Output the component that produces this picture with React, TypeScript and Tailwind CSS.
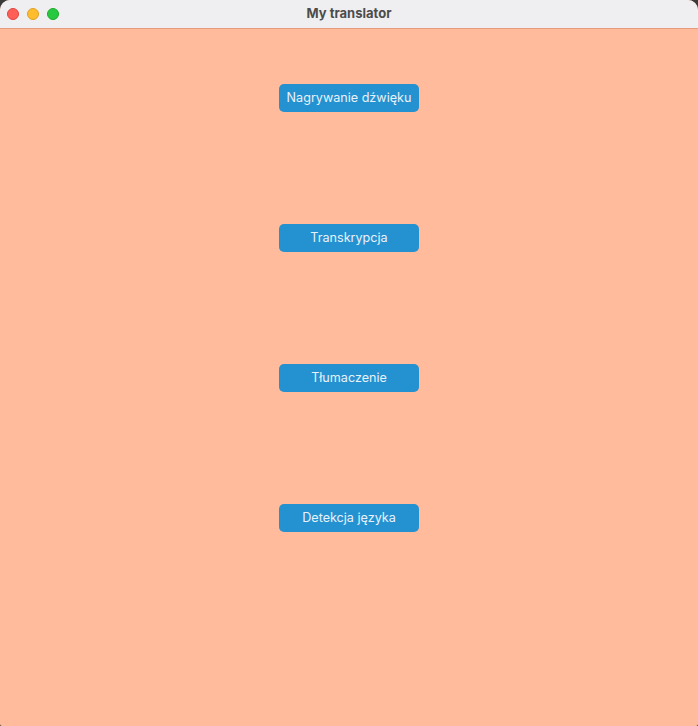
import * as React from 'react';

const actions = ['Nagrywanie dźwięku', 'Transkrypcja', 'Tłumaczenie', 'Detekcja języka'];

function TrafficLights() {
  return (
    <div className="flex items-center gap-2 pl-[7px]">
      <span className="h-3 w-3 rounded-full border border-[#e0443e] bg-[#ff5f57]" />
      <span className="h-3 w-3 rounded-full border border-[#dea123] bg-[#febc2e]" />
      <span className="h-3 w-3 rounded-full border border-[#1aab29] bg-[#28c840]" />
    </div>
  );
}

export default function App() {
  return (
    <div className="h-[726px] w-[698px] bg-[#3a3a3a] font-['Inter',sans-serif]">
      <div className="flex h-full flex-col overflow-hidden rounded-t-[10px] rounded-b-[2px] bg-[#ffbb9b]">
        <div className="relative flex h-[29px] items-center border-b border-[#e79a7c] bg-[#efeff1]">
          <TrafficLights />
          <div className="absolute inset-x-0 top-0 flex h-full items-center justify-center text-[13px] font-bold text-[#4c4c4c]">
            My translator
          </div>
        </div>
        <div className="flex flex-col items-center gap-[112px] pt-[55px]">
          {actions.map(label => (
            <button
              key={label}
              className="h-[28px] w-[140px] rounded-[5px] bg-[#2491d1] text-[12.6px] text-[#e9f1f8]"
            >
              {label}
            </button>
          ))}
        </div>
      </div>
    </div>
  );
}
